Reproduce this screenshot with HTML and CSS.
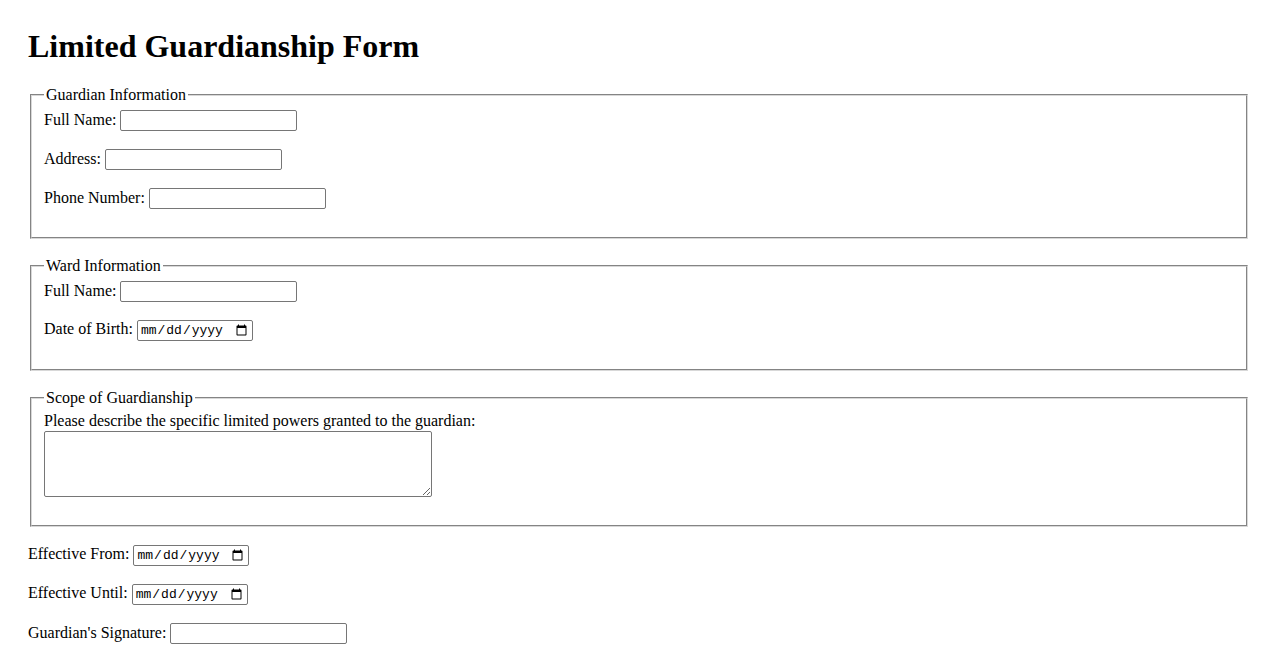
FILE: index.html
```html
<!DOCTYPE html>
<html lang="en">
<head>
<meta charset="utf-8">
<title>Limited Guardianship Form</title>
<link rel="stylesheet" href="styles.css">
</head>
<body>
<h1 class="title">Limited Guardianship Form</h1>
<form class="form">
  <fieldset class="section">
    <legend>Guardian Information</legend>
    <div class="group"><label>Full Name: <input type="text" class="text"></label></div>
    <div class="group"><label>Address: <input type="text" class="text"></label></div>
    <div class="group"><label>Phone Number: <input type="tel" class="text"></label></div>
  </fieldset>
  <fieldset class="section">
    <legend>Ward Information</legend>
    <div class="group"><label>Full Name: <input type="text" class="text"></label></div>
    <div class="group"><label>Date of Birth: <input type="date" class="date"></label></div>
  </fieldset>
  <fieldset class="section">
    <legend>Scope of Guardianship</legend>
    <div class="group">
      <label class="block-label" for="scope">Please describe the specific limited powers granted to the guardian:</label>
      <textarea id="scope" class="area" rows="4" cols="50"></textarea>
    </div>
  </fieldset>
  <div class="group"><label>Effective From: <input type="date" class="date"></label></div>
  <div class="group"><label>Effective Until: <input type="date" class="date"></label></div>
  <div class="group last"><label>Guardian's Signature: <input type="text" class="text"></label></div>
</form>
</body>
</html>
```

FILE: styles.css
```css
html, body {
  overflow: hidden;
}
body {
  margin: 0;
  padding: 28px;
  font-family: "Liberation Serif", "Times New Roman", serif;
  font-size: 16px;
  color: #000;
  background: #fff;
}
.title {
  margin: 0 0 0.67em;
  font-size: 32px;
  font-weight: bold;
}
.section {
  margin: 0 2px 18px;
  padding: 0.35em 0.75em 0.625em;
  border: 2px groove #d8d8d8;
}
.section legend {
  padding: 0 2px;
}
.group {
  margin-bottom: 16px;
  min-height: 23px;
}
.block-label {
  display: block;
  margin-bottom: 1px;
}
.text {
  width: 177px;
  height: 21px;
  box-sizing: border-box;
  border: 1px solid #767676;
  border-radius: 2px;
  padding: 1px 2px;
  font-family: "Liberation Sans", Arial, sans-serif;
  font-size: 13.33px;
}
.date {
  width: 116px;
  height: 21px;
  box-sizing: border-box;
  border: 1px solid #767676;
  border-radius: 2px;
  padding: 1px 2px;
  font-family: "Liberation Mono", monospace;
  font-size: 13px;
}
.area {
  width: 388px;
  height: 66px;
  box-sizing: border-box;
  border: 1px solid #767676;
  border-radius: 2px;
  padding: 2px;
  margin-bottom: 2px;
  font-family: "Liberation Mono", monospace;
  font-size: 13px;
  vertical-align: bottom;
}
```
